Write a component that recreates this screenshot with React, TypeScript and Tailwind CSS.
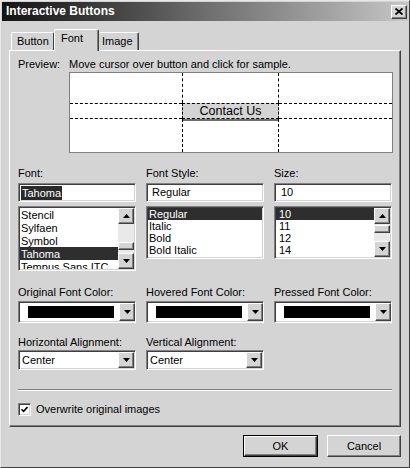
import React from "react";

const sunken =
  "border border-t-[#808080] border-l-[#808080] border-b-white border-r-white shadow-[inset_1px_1px_0_#404040,inset_-1px_-1px_0_#d4d4d4]";
const raised =
  "border border-t-white border-l-white border-b-[#404040] border-r-[#404040] shadow-[inset_-1px_-1px_0_#808080] bg-[#d4d4d4]";

function Arrow({ up = false }: { up?: boolean }) {
  return (
    <svg width="7" height="4" viewBox="0 0 7 4">
      <path d={up ? "M0 4h7L3.5 0z" : "M0 0h7L3.5 4z"} fill="#000" />
    </svg>
  );
}

function ArrowButton({ up = false, h = "h-[16px]" }: { up?: boolean; h?: string }) {
  return (
    <div className={`${raised} w-[16px] ${h} flex items-center justify-center shrink-0`}>
      <Arrow up={up} />
    </div>
  );
}

function ListBox({
  items,
  selected,
  height,
  pad,
  rowH = "h-[13px]",
  scroll,
}: {
  items: string[];
  selected: string;
  height: string;
  pad: string;
  rowH?: string;
  scroll?: "font" | "size";
}) {
  return (
    <div className={`${sunken} ${height} bg-white flex p-[1px] overflow-hidden`}>
      <div className="flex-1 flex flex-col overflow-hidden">
        {items.map((item) => (
          <div
            key={item}
            className={`${rowH} leading-[12px] shrink-0 whitespace-nowrap ${pad} ${
              item === selected ? "bg-[#2e2e2e] text-white" : ""
            }`}
          >
            {item}
          </div>
        ))}
      </div>
      {scroll && (
        <div className="w-[16px] flex flex-col">
          <ArrowButton up />
          <div
            className={`flex-1 bg-[#e9e9e9] flex flex-col ${
              scroll === "font" ? "justify-end pb-[3px]" : "justify-start pt-[1px]"
            }`}
          >
            <div className={`${raised} h-[8px]`} />
          </div>
          <ArrowButton />
        </div>
      )}
    </div>
  );
}

function ColorDrop() {
  return (
    <div className={`${sunken} h-[22px] bg-white flex items-center p-[1px]`}>
      <div className="flex-1 flex items-center h-full pl-[8px] pr-[5px]">
        <div className="w-[86px] h-[12px] bg-black" />
      </div>
      <ArrowButton h="h-[18px]" />
    </div>
  );
}

function SelectDrop({ value }: { value: string }) {
  return (
    <div className={`${sunken} h-[20px] bg-white flex items-center p-[1px]`}>
      <div className="flex-1 pl-[2px] leading-[16px]">{value}</div>
      <ArrowButton />
    </div>
  );
}

function Label({ children }: { children: React.ReactNode }) {
  return <div className="h-[13px] leading-[13px] whitespace-nowrap">{children}</div>;
}

export default function App() {
  return (
    <div className="w-[410px] h-[468px] bg-[#d4d4d4] border border-t-[#e8e8e8] border-l-[#e8e8e8] border-b-[#404040] border-r-[#404040] p-[1px] flex flex-col font-['Liberation_Sans',Arial,sans-serif] text-[11px] text-black overflow-hidden">
      {/* title bar */}
      <div className="h-[19px] shrink-0 flex items-center justify-between bg-gradient-to-r from-[#141414] via-[#6e6e6e] to-[#c6c6c6] pl-[4px] pr-[1px]">
        <span className="text-white font-bold text-[12px] leading-[19px]">
          Interactive Buttons
        </span>
        <div className={`${raised} w-[16px] h-[14px] flex items-center justify-center`}>
          <svg width="8" height="7" viewBox="0 0 8 7">
            <path d="M0.5 0.5L7.5 6.5M7.5 0.5L0.5 6.5" stroke="#000" strokeWidth="1.8" />
          </svg>
        </div>
      </div>

      {/* tabs */}
      <div className="ml-[9px] mt-[8px] h-[21px] shrink-0 flex items-end relative z-10">
        <div className="w-[43px] h-[18px] border-t border-l border-t-white border-l-white border-r border-r-[#404040] rounded-t-[2px] pl-[5px] leading-[17px]">
          Button
        </div>
        <div className="w-[45px] h-[22px] -mb-[1px] bg-[#d4d4d4] border-t border-l border-t-white border-l-white border-r border-r-[#404040] shadow-[inset_-1px_0_0_#808080] rounded-t-[2px] pl-[6px] leading-[16px]">
          Font
        </div>
        <div className="w-[40px] h-[18px] border-t border-t-white border-r border-r-[#404040] shadow-[inset_-1px_0_0_#808080] rounded-t-[2px] pl-[3px] leading-[17px]">
          Image
        </div>
      </div>

      {/* panel */}
      <div className="ml-[7px] w-[392px] h-[377px] shrink-0 border border-t-white border-l-white border-b-[#404040] border-r-[#404040] shadow-[inset_-1px_-1px_0_#808080] pl-[8px] pt-[7px] flex flex-col">
        <div className="flex h-[13px] leading-[13px]">
          <span className="w-[51px]">Preview:</span>
          <span>Move cursor over button and click for sample.</span>
        </div>
        <div className="ml-[51px] mt-[1px] w-[324px] h-[81px] bg-white border border-[#808080] grid grid-cols-[112px_97px_1fr] grid-rows-[30px_16px_1fr]">
          <div />
          <div className="border-x border-dashed border-black" />
          <div />
          <div className="border-y border-dashed border-black" />
          <div className="border border-dashed border-black bg-[#d4d4d4] shadow-[0_2px_0_#6e6e6e] flex items-center justify-center text-[12.5px] leading-[14px]">
            Contact Us
          </div>
          <div className="border-y border-dashed border-black" />
          <div />
          <div className="border-x border-dashed border-black" />
          <div />
        </div>

        {/* font selection */}
        <div className="mt-[14px] grid grid-cols-[118px_118px_118px] gap-x-[10px] items-start">
          <div className="flex flex-col">
            <Label>Font:</Label>
            <div className={`${sunken} mt-[3px] h-[19px] bg-white flex items-center pl-[2px]`}>
              <span className="bg-[#2a2a2a] text-white leading-[14px] px-[1px]">Tahoma</span>
            </div>
            <div className="mt-[4px]">
              <ListBox
                items={["Stencil", "Sylfaen", "Symbol", "Tahoma", "Tempus Sans ITC"]}
                selected="Tahoma"
                height="h-[65px]"
                pad="pl-[1px] pt-[1px]"
                scroll="font"
              />
            </div>
          </div>
          <div className="flex flex-col">
            <Label>Font Style:</Label>
            <div className={`${sunken} mt-[3px] h-[19px] bg-white flex items-center pl-[5px]`}>
              Regular
            </div>
            <div className="mt-[4px]">
              <ListBox
                items={["Regular", "Italic", "Bold", "Bold Italic"]}
                selected="Regular"
                height="h-[53px]"
                pad="pl-[1px]"
                rowH="h-[12px]"
              />
            </div>
          </div>
          <div className="flex flex-col">
            <Label>Size:</Label>
            <div className={`${sunken} mt-[3px] h-[19px] bg-white flex items-center pl-[6px]`}>
              10
            </div>
            <div className="mt-[4px]">
              <ListBox
                items={["10", "11", "12", "14"]}
                selected="10"
                height="h-[53px]"
                pad="pl-[3px]"
                rowH="h-[12px]"
                scroll="size"
              />
            </div>
          </div>
        </div>

        {/* colors */}
        <div className="mt-[15px] grid grid-cols-[118px_118px_118px] gap-x-[10px]">
          <div className="flex flex-col gap-[2px]">
            <Label>Original Font Color:</Label>
            <ColorDrop />
          </div>
          <div className="flex flex-col gap-[2px]">
            <Label>Hovered Font Color:</Label>
            <ColorDrop />
          </div>
          <div className="flex flex-col gap-[2px]">
            <Label>Pressed Font Color:</Label>
            <ColorDrop />
          </div>
        </div>

        {/* alignment */}
        <div className="mt-[13px] grid grid-cols-[118px_118px_118px] gap-x-[10px]">
          <div className="flex flex-col gap-[1px]">
            <Label>Horizontal Alignment:</Label>
            <SelectDrop value="Center" />
          </div>
          <div className="flex flex-col gap-[1px]">
            <Label>Vertical Alignment:</Label>
            <SelectDrop value="Center" />
          </div>
        </div>

        <div className="mt-[19px] w-[374px] h-[2px] border-t border-t-[#808080] border-b border-b-white" />

        <div className="mt-[12px] flex items-center h-[13px]">
          <div className={`${sunken} w-[13px] h-[13px] bg-white flex items-center justify-center`}>
            <svg width="7" height="7" viewBox="0 0 7 7">
              <path d="M0.5 3.2L2.6 5.4L6.5 1" stroke="#000" strokeWidth="1.6" fill="none" />
            </svg>
          </div>
          <span className="ml-[5px] leading-[13px]">Overwrite original images</span>
        </div>
      </div>

      {/* buttons */}
      <div className="mt-[8px] pr-[7px] flex justify-end gap-[9px]">
        <div className="w-[75px] h-[22px] border border-black">
          <div className={`${raised} w-full h-full flex items-center justify-center`}>OK</div>
        </div>
        <div className={`${raised} w-[74px] h-[22px] flex items-center justify-center`}>
          Cancel
        </div>
      </div>
    </div>
  );
}
